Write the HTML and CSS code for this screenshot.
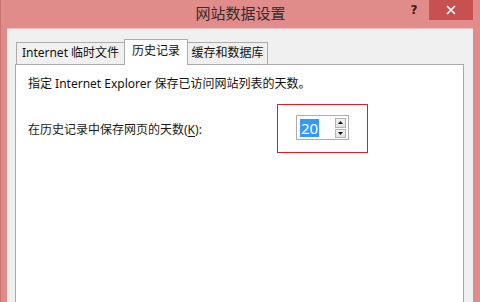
FILE: index.html
```html
<!DOCTYPE html>
<html lang="zh-CN">
<head>
<meta charset="utf-8">
<title>网站数据设置</title>
<link rel="stylesheet" href="styles.css">
</head>
<body>
<div class="window">
  <div class="titlebar">
    <div class="title">网站数据设置</div>
    <div class="help">?</div>
    <div class="close">
      <svg width="10" height="10" viewBox="0 0 10 10"><path d="M1 1L9 9M9 1L1 9" stroke="#fff" stroke-width="1.6"/></svg>
    </div>
  </div>
  <div class="client">
    <div class="tabs">
      <div class="tab tab-1">Internet 临时文件</div>
      <div class="tab tab-2 selected">历史记录</div>
      <div class="tab tab-3">缓存和数据库</div>
    </div>
    <div class="panel">
      <div class="desc">指定 Internet Explorer 保存已访问网站列表的天数。</div>
      <div class="row">
        <div class="label">在历史记录中保存网页的天数(<u>K</u>):</div>
        <div class="mark">
          <div class="spinner">
            <div class="value"><span class="sel">20</span></div>
            <div class="spin">
              <div class="spin-btn"><svg width="5" height="3" viewBox="0 0 5 3"><path d="M0 3L2.5 0L5 3Z" fill="#111"/></svg></div>
              <div class="spin-btn"><svg width="5" height="3" viewBox="0 0 5 3"><path d="M0 0L2.5 3L5 0Z" fill="#111"/></svg></div>
            </div>
          </div>
        </div>
      </div>
    </div>
  </div>
</div>
</body>
</html>
```
FILE: styles.css
```css
html, body {
  margin: 0;
  padding: 0;
  width: 480px;
  height: 302px;
  overflow: hidden;
  background: #e08c8a;
  font-family: "Noto Sans", "Noto Sans CJK SC", sans-serif;
  color: #1a1a1a;
}

.window {
  width: 480px;
  height: 302px;
  display: flex;
  flex-direction: column;
  border-left: 1px solid #c97472;
  box-sizing: border-box;
}

.titlebar {
  height: 28px;
  flex: none;
  display: flex;
  align-items: flex-start;
  position: relative;
}

.title {
  position: absolute;
  left: 0;
  right: 0;
  top: 3px;
  text-align: center;
  font-size: 15px;
  line-height: 20px;
  color: #3a2a2a;
  font-family: "Noto Sans CJK SC", sans-serif;
}

.help {
  margin-left: auto;
  margin-top: 1px;
  width: 14px;
  font-size: 12px;
  font-weight: bold;
  line-height: 18px;
  color: #3a1a1a;
  font-family: "DejaVu Sans", sans-serif;
  text-align: center;
  position: relative;
}

.close {
  margin-left: 8px;
  margin-right: 7px;
  width: 44px;
  height: 20px;
  background: #c75050;
  display: flex;
  align-items: center;
  justify-content: center;
  position: relative;
}

.client {
  flex: 1;
  margin: 0 7px 0 6px;
  background: #f0f0f0;
  padding: 10px 9px 0 8px;
  display: flex;
  flex-direction: column;
  border-top: 1px solid #ecc0bf;
}

.tabs {
  display: flex;
  align-items: flex-end;
  height: 25px;
  padding-left: 1px;
  position: relative;
  z-index: 1;
}

.tab {
  box-sizing: border-box;
  height: 22px;
  border: 1px solid #acacac;
  border-bottom: none;
  background: #f0f0f0;
  font-size: 12px;
  line-height: 20px;
  text-align: center;
  white-space: nowrap;
  color: #111;
  font-family: "Noto Sans", "Noto Sans CJK SC", sans-serif;
}

.tab-1 { width: 108px; border-right: none; }
.tab-2 { width: 64px; }
.tab-3 { width: 80px; border-left: none; }

.tab.selected {
  height: 26px;
  background: #fff;
  line-height: 22px;
  margin-bottom: -1px;
}

.panel {
  flex: 1;
  background: #fff;
  border: 1px solid #a9a9a9;
  border-bottom: none;
  padding: 11px 12px 0 12px;
  font-size: 12px;
}

.desc {
  line-height: 16px;
  color: #111;
  white-space: nowrap;
}

.row {
  display: grid;
  grid-template-columns: 249px 91px;
  align-items: center;
  margin-top: 12px;
}

.label {
  line-height: 16px;
  padding-top: 3px;
  white-space: nowrap;
}

.label u {
  text-decoration-thickness: 1px;
  text-underline-offset: 2px;
}

.mark {
  box-sizing: border-box;
  width: 91px;
  height: 49px;
  border: 1px solid #c8282d;
  display: flex;
  align-items: center;
  justify-content: center;
  padding-bottom: 2px;
}

.spinner {
  box-sizing: border-box;
  width: 53px;
  height: 25px;
  border: 1px solid #abadb3;
  background: #fff;
  display: flex;
  align-items: stretch;
  padding: 2px 2px 1px 3px;
}

.value {
  flex: 1;
  display: flex;
  align-items: center;
}

.sel {
  background: #3399ff;
  color: #fff;
  font-size: 15px;
  line-height: 18px;
  padding: 0 1px;
  font-family: "Noto Sans", sans-serif;
}

.spin {
  width: 11px;
  display: flex;
  flex-direction: column;
  gap: 1px;
}

.spin-btn {
  flex: 1;
  box-sizing: border-box;
  border: 1px solid #b4b4b4;
  background: linear-gradient(#f2f2f2, #e2e2e2);
  display: flex;
  align-items: center;
  justify-content: center;
}
```
